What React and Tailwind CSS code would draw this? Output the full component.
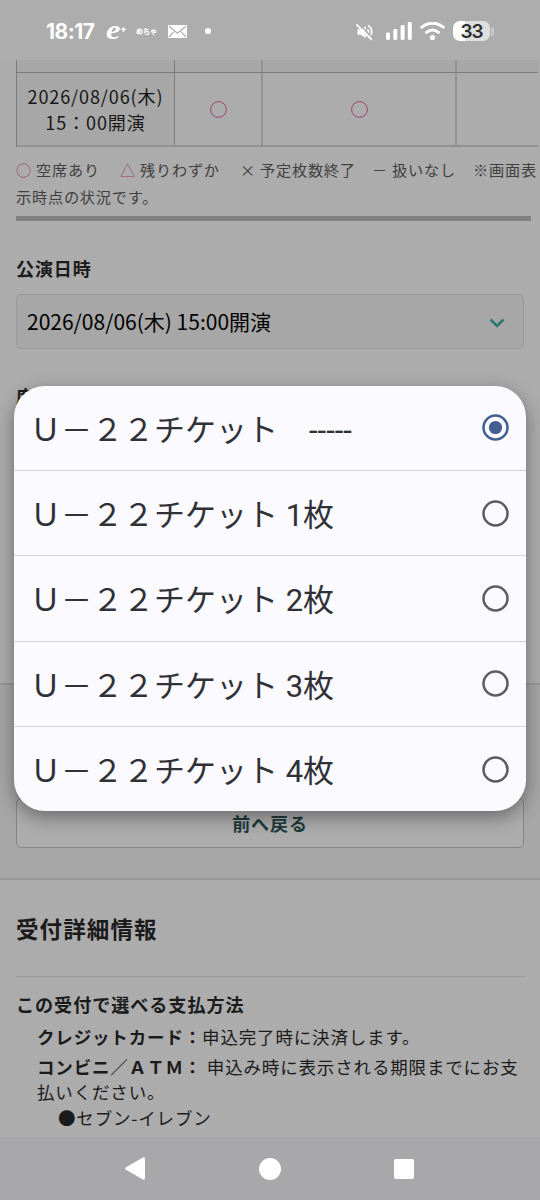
import React, { useState } from "react";

const ticketOptions = [
  "Ｕ－２２チケット　-----",
  "Ｕ－２２チケット 1枚",
  "Ｕ－２２チケット 2枚",
  "Ｕ－２２チケット 3枚",
  "Ｕ－２２チケット 4枚",
];

function RadioMark({ checked }) {
  const color = checked ? "#435e91" : "#5c5d63";

  return (
    <svg className="h-[27px] w-[27px]" viewBox="0 0 27 27">
      <circle cx="13.5" cy="13.5" r="12" fill="none" stroke={color} strokeWidth="2.5" />
      {checked && <circle cx="13.5" cy="13.5" r="6.6" fill={color} />}
    </svg>
  );
}

function StatusBar() {
  return (
    <header className="flex h-[60px] shrink-0 items-center bg-[#adadad] pt-[2px] pl-[46px] text-white">
      <span className="w-[60px] font-['Inter'] text-[21px] leading-none font-bold tracking-[-0.5px]">
        18:17
      </span>
      <span className="flex w-[30px] items-start font-['Liberation_Serif'] leading-none font-bold">
        <span className="-mt-[2px] inline-block w-[14px] origin-left scale-x-120 text-[27px] leading-[26px] italic">
          e
        </span>
        <span className="mt-[3px] font-['Inter'] text-[10px] leading-[12px]">+</span>
      </span>
      <span className="w-[32px] font-['Noto_Sans_CJK_JP'] text-[7px] leading-none font-black whitespace-nowrap">
        めちゃ
      </span>
      <svg className="h-[13px] w-[19px]" viewBox="0 0 19 13">
        <rect width="19" height="13" fill="#fff" />
        <path
          d="M1 1.2 9.5 8.2 18 1.2M1 12l5-5.4M18 12l-5-5.4"
          fill="none"
          stroke="#adadad"
          strokeWidth="1.2"
        />
      </svg>
      <span className="ml-[18px] h-[6px] w-[6px] rounded-full bg-white" />

      <div className="ml-auto flex items-center pr-[46px]">
        <svg className="mt-[2px] h-[18px] w-[18px]" viewBox="0 0 18 18">
          <path d="M1.5 6.2h3.5L9.8 3.2v12L5 11.8H1.5z" fill="#fff" />
          <path
            d="M11.4 6.4c1.4 1.5 1.4 3.6 0 5M12 2.6c4.8 2.4 4.8 9.6 0.6 12.4"
            fill="none"
            stroke="#fff"
            strokeWidth="1.7"
          />
          <path d="M1.8 0 17.3 15.5" stroke="#adadad" strokeWidth="1.4" />
          <path d="M.4 1.4 15.9 16.9" stroke="#fff" strokeWidth="1.8" />
        </svg>
        <svg className="ml-[12px] h-[18px] w-[26px]" viewBox="0 0 26 18">
          <g fill="#fff">
            <rect x="0" y="10.5" width="4" height="7.5" rx="1.4" />
            <rect x="7.3" y="7" width="4" height="11" rx="1.4" />
            <rect x="14.6" y="3" width="4" height="15" rx="1.4" />
            <rect x="21.8" y="0" width="4" height="18" rx="1.4" />
          </g>
        </svg>
        <svg className="ml-[8px] h-[19px] w-[25px]" viewBox="0 0 25 19">
          <path
            d="M1.8 5.2C8-.2 17-.2 23.2 5.2M6.5 10.4c3.7-3 8.3-3 12 0"
            fill="none"
            stroke="#fff"
            strokeWidth="3"
            strokeLinecap="round"
          />
          <circle cx="12.5" cy="15.5" r="2.6" fill="#fff" />
        </svg>
        <span className="ml-[8px] flex h-[20px] w-[37px] items-center justify-center rounded-[7px] bg-linear-to-r from-white from-33% to-[#dedede] to-33% font-['Inter'] text-[19px] leading-none font-semibold tracking-[-1px] text-[#2e2e2e]">
          33
        </span>
        <span className="ml-[1px] h-[9px] w-[3px] rounded-r-full bg-[#c8c8c8]" />
      </div>
    </header>
  );
}

function CircleMark() {
  return (
    <svg className="mt-px h-[17px] w-[17px]" viewBox="0 0 17 17">
      <circle cx="8.5" cy="8.5" r="7.9" fill="none" stroke="#994069" />
    </svg>
  );
}

function ScheduleTable() {
  return (
    <div className="ml-4 w-[522px] border-l border-[#7b7b7b]">
      <div className="flex h-[13px] border-b border-[#7b7b7b] bg-[#a7a7a7]">
        <div className="w-[158px] border-r border-[#7b7b7b]" />
        <div className="w-[88px] border-r-2 border-[#929292]" />
        <div className="w-[194px] border-r-2 border-[#929292]" />
      </div>
      <div className="flex h-[74px] border-b-2 border-[#929292]">
        <div className="flex w-[158px] flex-col justify-center border-r border-[#7b7b7b] bg-[#a7a7a7] text-center text-[18px] leading-[26px] tracking-[0.9px] text-[#171717]">
          <span>2026/08/06(木)</span>
          <span>15：00開演</span>
        </div>
        <div className="flex w-[88px] items-center justify-center border-r-2 border-[#929292]">
          <CircleMark />
        </div>
        <div className="flex w-[194px] items-center justify-center border-r-2 border-[#929292]">
          <CircleMark />
        </div>
      </div>
    </div>
  );
}

function Legend() {
  return (
    <div className="mt-[9px] pl-4 text-[15.2px] leading-[27px] tracking-[0.78px] text-[#404040]">
      <div className="flex whitespace-nowrap">
        <span className="w-[20px] text-[#994069]">○</span>
        <span className="w-[84px]">空席あり</span>
        <span className="w-[20px] text-[#994069]">△</span>
        <span className="w-[100px]">残りわずか</span>
        <span className="w-[20px]">×</span>
        <span className="w-[112px]">予定枚数終了</span>
        <span className="w-[20px]">－</span>
        <span className="w-[81px]">扱いなし</span>
        <span>※画面表</span>
      </div>
      <div>示時点の状況です。</div>
    </div>
  );
}

function PaymentInfo() {
  return (
    <section className="px-4 pt-[31px] text-[#1b1b1b]">
      <h2 className="text-[22.5px] leading-[34px] font-bold tracking-[1.1px]">
        受付詳細情報
      </h2>
      <div className="mt-[31px] h-px w-[509px] bg-[#999]" />
      <h3 className="mt-[14px] text-[18.1px] leading-[26px] font-bold tracking-[0.95px]">
        この受付で選べる支払方法
      </h3>
      <div className="pl-[21px] text-[17.5px] leading-[25.5px] tracking-[0.84px] whitespace-nowrap">
        <p className="mt-[7px]">
          <b>クレジットカード：</b>申込完了時に決済します。
        </p>
        <p className="mt-[4px]">
          <b>コンビニ／ＡＴＭ：</b> 申込み時に表示される期限までにお支
          <br />
          払いください。
        </p>
        <p className="pl-[21px]">●セブン-イレブン</p>
      </div>
    </section>
  );
}

function NavigationBar() {
  return (
    <nav className="flex h-[63px] shrink-0 items-center bg-[#a8a8aa] pl-[125px]">
      <svg className="h-[23px] w-[21px]" viewBox="0 0 21 23">
        <path
          d="M1 10.2 17.5.7c1.5-.8 2.5-.3 2.5 1.3v19c0 1.6-1 2.1-2.5 1.3L1 12.8c-1.2-.7-1.2-1.9 0-2.6z"
          fill="#fff"
        />
      </svg>
      <span className="ml-[113px] h-[22px] w-[22px] rounded-full bg-white" />
      <span className="ml-[113px] h-[20px] w-[20px] rounded-[2px] bg-white" />
    </nav>
  );
}

function TicketDialog({ selected, onSelect }) {
  return (
    <div
      role="radiogroup"
      className="absolute top-[385.5px] left-[14px] w-[512px] overflow-hidden rounded-[31px] bg-[#fafaff] font-['Roboto','Noto_Sans_CJK_JP',sans-serif] shadow-[0_6px_18px_rgba(0,0,0,0.38)]"
    >
      {ticketOptions.map((option, index) => (
        <button
          key={option}
          role="radio"
          aria-checked={selected === index}
          onClick={() => onSelect(index)}
          className="flex h-[85.4px] w-full items-center justify-between border-b border-[#d4d4d9] pr-[17px] pl-[16px] text-left text-[31px] leading-[40px] whitespace-pre text-[#303136] last:h-[84px] last:border-b-0"
        >
          <span className="pt-[6px]">{option}</span>
          <RadioMark checked={selected === index} />
        </button>
      ))}
    </div>
  );
}

export default function App() {
  const [selected, setSelected] = useState(0);

  return (
    <div className="relative flex h-[1200px] w-[540px] flex-col overflow-hidden bg-[#acacac] font-['Noto_Sans_CJK_JP',sans-serif]">
      <StatusBar />
      <main className="flex-1 overflow-hidden">
        {/* Availability */}
        <ScheduleTable />
        <Legend />
        <div className="mt-[6px] ml-4 h-[5px] w-[515px] bg-[#808080]" />

        {/* Date and seat selection */}
        <section className="h-[462px] px-4 pt-[34px]">
          <h3 className="text-[18px] leading-[26px] font-bold tracking-[0.9px] text-[#1b1b1b]">
            公演日時
          </h3>
          <div className="mt-[13px] flex h-[55px] w-[508px] items-center justify-between rounded-[5px] border border-[#999] bg-[#a7a7a7] pr-[18px] pl-[10px] text-[21px] text-black">
            <span>2026/08/06(木) 15:00開演</span>
            <svg className="mt-[2px] h-[10px] w-[16px]" viewBox="0 0 16 10">
              <path d="M1.5 1.5 8 8l6.5-6.5" fill="none" stroke="#2a7774" strokeWidth="2.6" />
            </svg>
          </div>
          <h3 className="mt-[34px] text-[18px] leading-[26px] font-bold tracking-[0.9px] text-[#1b1b1b]">
            席種
          </h3>
        </section>

        {/* Form actions */}
        <section className="flex h-[197px] items-end border-y-2 border-[#999] bg-[#a6a6a6] px-4 pb-[30px]">
          <button className="h-[50px] w-[509px] rounded-[5px] border border-[#858585] bg-[#acacac] text-[18px] font-bold tracking-[0.9px] text-[#203b3b]">
            前へ戻る
          </button>
        </section>

        <PaymentInfo />
      </main>
      <NavigationBar />
      <TicketDialog selected={selected} onSelect={setSelected} />
    </div>
  );
}
